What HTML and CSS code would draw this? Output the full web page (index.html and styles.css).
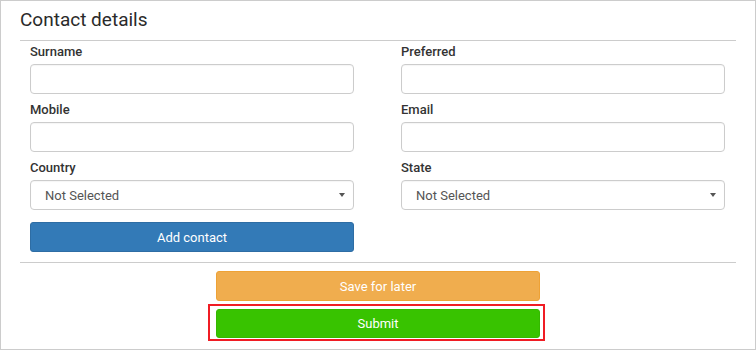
FILE: index.html
```html
<!DOCTYPE html>
<html lang="en">
<head>
<meta charset="utf-8">
<title>Contact details</title>
<link rel="stylesheet" href="styles.css">
</head>
<body>
<div class="panel">
  <h2 class="panel-title">Contact details</h2>
  <form class="form">
    <div class="grid">
      <div class="field">
        <label class="label">Surname</label>
        <input class="control" type="text">
      </div>
      <div class="field">
        <label class="label">Preferred</label>
        <input class="control" type="text">
      </div>
      <div class="field">
        <label class="label">Mobile</label>
        <input class="control" type="text">
      </div>
      <div class="field">
        <label class="label">Email</label>
        <input class="control" type="text">
      </div>
      <div class="field">
        <label class="label">Country</label>
        <div class="select-wrap">
          <select class="control select"><option>Not Selected</option></select>
        </div>
      </div>
      <div class="field">
        <label class="label">State</label>
        <div class="select-wrap">
          <select class="control select"><option>Not Selected</option></select>
        </div>
      </div>
      <div class="field">
        <button type="button" class="btn btn-blue">Add contact</button>
      </div>
    </div>
  </form>
  <div class="actions">
    <button type="button" class="btn btn-orange wide">Save for later</button>
    <div class="highlight">
      <button type="button" class="btn btn-green wide">Submit</button>
    </div>
  </div>
</div>
</body>
</html>
```

FILE: styles.css
```css
* { box-sizing: border-box; }

html, body {
  margin: 0;
  padding: 0;
  background: #fff;
}

body {
  font-family: Roboto, "Liberation Sans", Arial, sans-serif;
  color: #333;
}

.panel {
  width: 756px;
  height: 350px;
  border: 1px solid #ccc;
  padding: 0 19px;
}

.panel-title {
  margin: 0;
  padding: 7px 0 8px;
  font-size: 19px;
  line-height: 24px;
  font-weight: 400;
  color: #2a2a2a;
  border-bottom: 1px solid #ccc;
}

.form {
  padding: 2px 11px 10px 10px;
  border-bottom: 1px solid #ccc;
}

.grid {
  display: grid;
  grid-template-columns: 1fr 1fr;
  column-gap: 47px;
  row-gap: 7px;
}

.field {
  display: flex;
  flex-direction: column;
}

.label {
  font-size: 13px;
  font-weight: 500;
  line-height: 18px;
  margin-bottom: 3px;
  color: #333;
}

.control {
  display: block;
  width: 100%;
  height: 30px;
  border: 1px solid #ccc;
  border-radius: 4px;
  background: #fff;
  font-family: inherit;
  font-size: 13px;
  color: #555;
  padding: 0 14px;
  margin: 0;
  box-shadow: inset 0 1px 1px rgba(0, 0, 0, 0.04);
}

.select-wrap {
  position: relative;
}

.select {
  -webkit-appearance: none;
  appearance: none;
  padding-right: 24px;
}

.select-wrap::after {
  content: "";
  position: absolute;
  right: 9px;
  top: 13px;
  border-left: 3px solid transparent;
  border-right: 3px solid transparent;
  border-top: 4px solid #555;
  pointer-events: none;
}

.btn {
  display: block;
  height: 30px;
  border: 1px solid transparent;
  border-radius: 3px;
  font-family: inherit;
  font-size: 13px;
  font-weight: 400;
  color: #fff;
  padding: 0;
  margin: 0;
  cursor: pointer;
}

.btn-blue {
  width: 100%;
  margin-top: 5px;
  background: #337ab7;
  border-color: #2e6da4;
}

.actions {
  display: flex;
  flex-direction: column;
  align-items: center;
  padding-top: 8px;
}

.wide {
  width: 324px;
}

.btn-orange {
  background: #f0ad4e;
  border-color: #eea236;
}

.highlight {
  margin-top: 3px;
  margin-right: 3px;
  border: 2px solid #f01c24;
  padding: 3px 3px 1px 6px;
}

.btn-green {
  height: 29px;
  background: #38c300;
  border-color: #35b800;
}
```
